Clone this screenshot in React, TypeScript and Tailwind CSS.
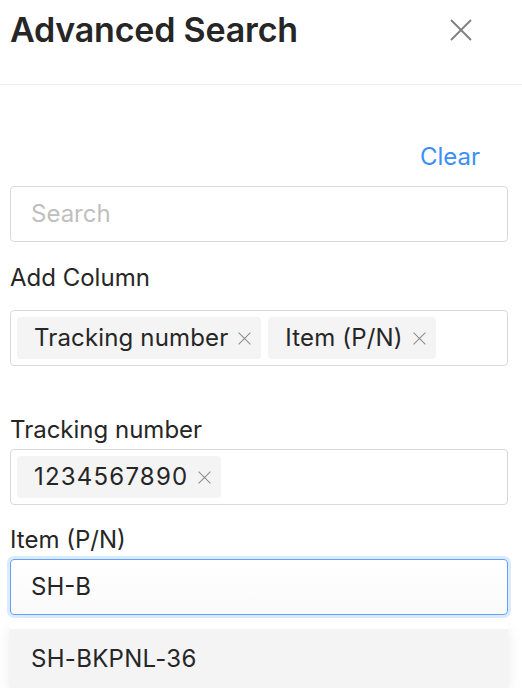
import React from 'react';

const CloseIcon = ({ className, width = 1.6 }: { className?: string; width?: number }) => (
  <svg viewBox="0 0 22 22" className={className} fill="none" stroke="currentColor" strokeWidth={width}>
    <path d="M1 1L21 21M21 1L1 21" />
  </svg>
);

const Tag = ({ label, digits }: { label: string; digits?: boolean }) => (
  <div className="flex items-center h-[42px] pl-[17px] pr-[10px] bg-[#f4f4f4] rounded-[4px] text-[#262626]">
    <span className={digits ? 'tracking-[1.2px]' : 'tracking-[0.15px]'}>{label}</span>
    <CloseIcon className="w-[13px] h-[13px] ml-[10px] text-[#8c8c8c]" width={1.8} />
  </div>
);

export default function App() {
  return (
    <div
      className="w-[522px] h-[688px] overflow-hidden bg-white text-[24px] text-[#262626]"
      style={{ fontFamily: 'Inter, "Noto Sans", sans-serif' }}
    >
      {/* Header */}
      <div className="flex items-center justify-between h-[85px] pl-[10px] pr-[50px] pb-[24px] border-b border-[#efefef]">
        <h1 className="text-[34px] font-semibold text-[#262626] leading-none tracking-[-0.2px]">Advanced Search</h1>
        <CloseIcon className="w-[22px] h-[22px] text-[#808080]" width={1.9} />
      </div>

      <div className="w-[498px] ml-[10px]">
        <div className="flex justify-end pt-[55px] pr-[28px]">
          <span className="text-[#3b8ff7] leading-[34px]">Clear</span>
        </div>

        <div className="mt-[12px] h-[56px] border border-[#d9d9d9] rounded-[4px] flex items-center px-[20px]">
          <span className="text-[#bfbfbf]">Search</span>
        </div>

        <div className="mt-[20px] leading-[32px]">Add Column</div>
        <div className="mt-[16px] h-[56px] border border-[#d9d9d9] rounded-[4px] flex items-center gap-[7px] px-[6px]">
          <Tag label="Tracking number" />
          <Tag label="Item (P/N)" />
        </div>

        <div className="mt-[48px] leading-[32px]">Tracking number</div>
        <div className="mt-[3px] h-[56px] border border-[#d9d9d9] rounded-[4px] flex items-center px-[6px]">
          <Tag label="1234567890" digits />
        </div>

        <div className="mt-[19px] leading-[32px]">Item (P/N)</div>
        <div className="mt-[3px] h-[56px] border border-[#5ea3f6] rounded-[4px] flex items-center px-[20px] shadow-[0_0_0_3px_#dbeafe] bg-gradient-to-b from-white to-[#fafafa]">
          <span>SH-B</span>
        </div>

        <div className="mt-[7px] rounded-[4px] bg-white pt-[7px] shadow-[0_6px_16px_rgba(0,0,0,0.08),0_3px_6px_-4px_rgba(0,0,0,0.12)]">
          <div className="h-[60px] flex items-center px-[21px] bg-[#f4f4f4] tracking-[0.3px]">SH-BKPNL-36</div>
        </div>
      </div>
    </div>
  );
}
